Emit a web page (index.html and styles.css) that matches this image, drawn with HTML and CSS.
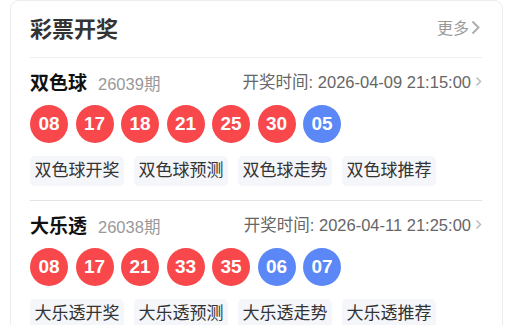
FILE: index.html
```html
<!DOCTYPE html>
<html lang="zh-CN">
<head>
    <meta charset="UTF-8">
    <meta name="viewport" content="width=device-width, initial-scale=1.0">
    <title>彩票开奖</title>
    <link rel="stylesheet" href="styles.css">
</head>
<body>

    <div class="card">
        <div class="card-head">
            <h2>彩票开奖</h2>
            <a class="more" href="#">更多
                <svg width="9" height="15" viewBox="0 0 9 15"><polyline points="1.5,1.5 7.5,7.5 1.5,13.5" fill="none" stroke="#aaa" stroke-width="1.8"/></svg>
            </a>
        </div>

        <div class="lottery">
            <div class="lottery-top">
                <div class="lottery-name">双色球<span class="issue">26039期</span></div>
                <div class="draw-time">开奖时间: 2026-04-09 21:15:00
                    <svg width="7" height="11" viewBox="0 0 7 11"><polyline points="1.5,1.5 5.5,5.5 1.5,9.5" fill="none" stroke="#bbb" stroke-width="1.5"/></svg>
                </div>
            </div>
            <div class="balls">
                <span class="ball red">08</span>
                <span class="ball red">17</span>
                <span class="ball red">18</span>
                <span class="ball red">21</span>
                <span class="ball red">25</span>
                <span class="ball red">30</span>
                <span class="ball blue">05</span>
            </div>
            <div class="tags">
                <a href="#">双色球开奖</a>
                <a href="#">双色球预测</a>
                <a href="#">双色球走势</a>
                <a href="#">双色球推荐</a>
            </div>
        </div>

        <div class="lottery">
            <div class="lottery-top">
                <div class="lottery-name">大乐透<span class="issue">26038期</span></div>
                <div class="draw-time">开奖时间: 2026-04-11 21:25:00
                    <svg width="7" height="11" viewBox="0 0 7 11"><polyline points="1.5,1.5 5.5,5.5 1.5,9.5" fill="none" stroke="#bbb" stroke-width="1.5"/></svg>
                </div>
            </div>
            <div class="balls">
                <span class="ball red">08</span>
                <span class="ball red">17</span>
                <span class="ball red">21</span>
                <span class="ball red">33</span>
                <span class="ball red">35</span>
                <span class="ball blue">06</span>
                <span class="ball blue">07</span>
            </div>
            <div class="tags">
                <a href="#">大乐透开奖</a>
                <a href="#">大乐透预测</a>
                <a href="#">大乐透走势</a>
                <a href="#">大乐透推荐</a>
            </div>
        </div>
    </div>

</body>
</html>
```

FILE: styles.css
```css
body {
    font-family: "Liberation Sans", "Noto Sans CJK SC", sans-serif;
    margin: 0;
    padding: 0;
    background-color: white;
    color: #333;
}
a {
    text-decoration: none;
}
.card {
    margin-left: 10px;
    width: 493px;
    height: 400px;
    padding: 0 20px 0 19px;
    border: 1px solid #ececec;
    border-radius: 9px;
    box-sizing: border-box;
}
.card-head {
    display: flex;
    align-items: center;
    justify-content: space-between;
    height: 52px;
    padding-bottom: 4px;
    border-bottom: 1px solid #eeeeee;
}
.card-head h2 {
    margin: 0;
    font-size: 22px;
    font-weight: bold;
    color: #333;
}
.more {
    display: flex;
    align-items: center;
    gap: 2px;
    font-size: 16px;
    color: #999;
    margin-right: 2px;
}
.lottery {
    padding: 11px 0 14px;
    border-bottom: 1px solid #e3e3e3;
}
.lottery-top {
    display: flex;
    align-items: center;
    justify-content: space-between;
    height: 24px;
}
.lottery-name {
    font-size: 19px;
    font-weight: bold;
    color: #111;
}
.issue {
    font-size: 16.5px;
    font-weight: normal;
    color: #999;
    margin-left: 11px;
}
.draw-time {
    display: flex;
    align-items: center;
    gap: 4px;
    font-size: 16.5px;
    color: #666;
}
.balls {
    display: flex;
    gap: 7.5px;
    margin-top: 12px;
}
.ball {
    width: 38px;
    height: 38px;
    border-radius: 50%;
    display: flex;
    align-items: center;
    justify-content: center;
    color: white;
    font-size: 19px;
    font-weight: bold;
}
.ball.red {
    background-color: #f8484b;
}
.ball.blue {
    background-color: #5b88f6;
}
.tags {
    display: flex;
    gap: 10px;
    margin-top: 13px;
}
.tags a {
    display: block;
    height: 30px;
    line-height: 30px;
    padding: 0 4.5px;
    font-size: 17px;
    color: #333;
    background-color: #f5f6fa;
    border-radius: 5px;
}
```
